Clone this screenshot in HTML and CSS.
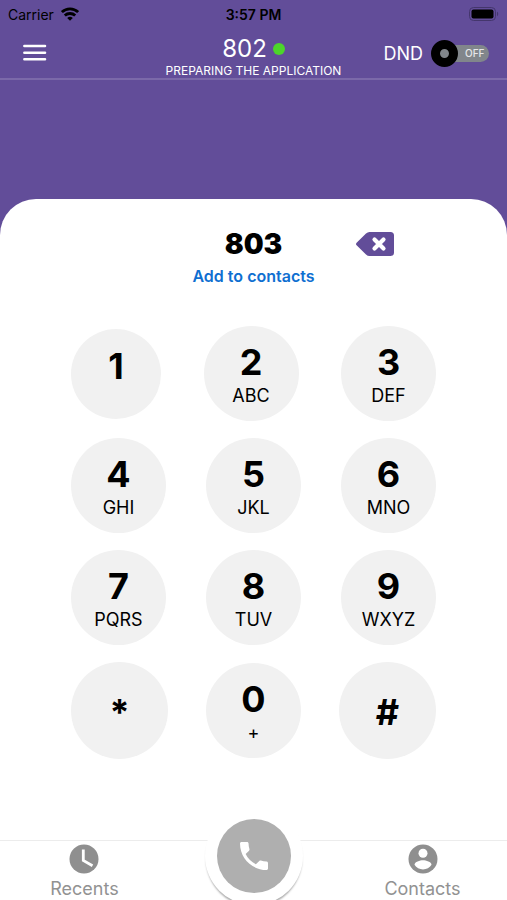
FILE: index.html
```html
<!DOCTYPE html>
<html lang="en">
<head>
<meta charset="utf-8">
<meta name="viewport" content="width=device-width, initial-scale=1">
<title>Dialer</title>
<link rel="stylesheet" href="styles.css">
</head>
<body>
<div class="app">
  <div class="status">
    <div class="carrier">Carrier
      <svg width="18" height="14" viewBox="0 0 18 14" fill="none" stroke="#000" stroke-width="2.8" aria-hidden="true"><path d="M.9 5.1a11.6 11.6 0 0 1 16.2 0M3.8 8.6a7.5 7.5 0 0 1 10.4 0"/><path d="M9 13.8 6.2 11a4 4 0 0 1 5.6 0z" fill="#000" stroke="none"/></svg>
    </div>
    <div class="time">3:57 PM</div>
    <svg class="battery" width="30" height="14" viewBox="0 0 30 14" aria-hidden="true"><rect x=".5" y=".5" width="26" height="13" rx="4" fill="none" stroke="#44366c"/><rect x="2.500" y="2.500" width="22" height="9" rx="2"/><path d="M28 4.8c1.6.6 1.6 3.8 0 4.4z" fill="#44366c"/></svg>
  </div>
  <header class="header">
    <button class="menu" type="button" aria-label="Menu"><svg width="24" height="18" viewBox="0 0 24 18" stroke="#fff" stroke-width="2.6" stroke-linecap="round"><path d="M1.4 2h20.600M1.4 8.700h20.600M1.4 15.200h20.600"/></svg></button>
    <div class="account">
      <div class="extension">802 <span class="online"></span></div>
      <div class="state">PREPARING THE APPLICATION</div>
    </div>
    <label class="dnd">DND
      <span class="switch"><input type="checkbox"><span class="knob"></span><span class="off">OFF</span></span>
    </label>
  </header>
  <main class="sheet">
    <div class="entry">
      <output class="number">803</output>
      <button class="erase" type="button" aria-label="Delete"><svg width="38" height="24" viewBox="0 0 38 24"><path d="M.6 10.7 10 1.6Q11.6 0 13.500 0H34.500q3.500 0 3.500 3.500v17q0 3.500-3.500 3.500H13.500q-1.900 0-3.500-1.600L.6 13.300q-1.200-1.300 0-2.600z" fill="#624d99"/><path d="m18.500 7.500 9 9m0-9-9 9" stroke="#fff" stroke-width="4.200" stroke-linecap="round"/></svg></button>
    </div>
    <button class="add" type="button">Add to contacts</button>
    <div class="pad">
      <div class="row">
        <button class="key small" type="button"><b>1</b><span></span></button>
        <button class="key" type="button"><b>2</b><span>ABC</span></button>
        <button class="key" type="button"><b>3</b><span>DEF</span></button>
      </div>
      <div class="row">
        <button class="key" type="button"><b>4</b><span>GHI</span></button>
        <button class="key" type="button"><b>5</b><span>JKL</span></button>
        <button class="key" type="button"><b>6</b><span>MNO</span></button>
      </div>
      <div class="row">
        <button class="key" type="button"><b>7</b><span>PQRS</span></button>
        <button class="key" type="button"><b>8</b><span>TUV</span></button>
        <button class="key" type="button"><b>9</b><span>WXYZ</span></button>
      </div>
      <div class="row">
        <button class="key symbol" type="button"><b>*</b></button>
        <button class="key" type="button"><b>0</b><span>+</span></button>
        <button class="key symbol" type="button"><b>#</b></button>
      </div>
    </div>
  </main>
  <nav class="tabs">
    <a class="tab" href="#recents">
      <svg width="30" height="30" viewBox="0 0 30 30"><circle cx="15" cy="15" r="14.500" fill="#8f8f8f"/><path d="M14.300 5.500v11l9.200 5.300" fill="none" stroke="#fff" stroke-width="2.800"/></svg>
      Recents
    </a>
    <button class="call" type="button" aria-label="Call"><span class="disc"><svg width="28" height="28" viewBox="3 3 18 18"><path fill="#fff" d="M6.620 10.790c1.440 2.830 3.760 5.140 6.590 6.590l2.200-2.200c.27-.27.67-.36 1.020-.24 1.120.37 2.330.57 3.570.57.55 0 1 .45 1 1V20c0 .55-.45 1-1 1-9.390 0-17-7.610-17-17 0-.55.45-1 1-1h3.500c.55 0 1 .45 1 1 0 1.250.2 2.450.57 3.570.11.35.03.74-.25 1.020l-2.200 2.200z"/></svg></span></button>
    <a class="tab" href="#contacts">
      <svg width="30" height="30" viewBox="0 0 30 30"><circle cx="15" cy="15" r="14.500" fill="#8f8f8f"/><circle cx="15" cy="9.200" r="4.500" fill="#fff"/><path d="M6.500 20.800c0-2.900 5.500-4.500 8.500-4.500s8.500 1.600 8.500 4.500c-1.900 2.900-5 4.600-8.500 4.600s-6.600-1.700-8.500-4.600z" fill="#fff"/></svg>
      Contacts
    </a>
  </nav>
</div>
</body>
</html>
```
FILE: styles.css
```css
* {
  box-sizing: border-box;
}

body {
  margin: 0;
  font-family: Inter, "Liberation Sans", sans-serif;
  color: #000;
}

button {
  padding: 0;
  border: 0;
  background: none;
  color: inherit;
  font: inherit;
  cursor: pointer;
}

svg {
  display: block;
  flex: none;
}

.app {
  display: flex;
  flex-direction: column;
  min-height: 100vh;
  overflow: hidden;
  background: linear-gradient(#624d99 280px, #fff 280px);
}

.status {
  display: grid;
  grid-template-columns: 1fr auto 1fr;
  align-items: center;
  height: 28px;
  padding: 0 8px;
  font-size: 14px;
}

.carrier {
  display: flex;
  align-items: center;
  gap: 7px;
}

.time {
  font-weight: 600;
}

.battery {
  justify-self: end;
}

.header {
  display: grid;
  grid-template-columns: 1fr auto 1fr;
  height: 52px;
  padding: 0 18px;
  border-bottom: 2px solid #7b69a9;
  color: #fff;
}

.menu {
  justify-self: start;
  align-self: center;
  margin-left: 5px;
}

.account {
  text-align: center;
}

.extension {
  display: flex;
  align-items: center;
  justify-content: center;
  gap: 6px;
  padding-top: 6px;
  font-size: 24px;
  line-height: 30px;
}

.online {
  width: 12px;
  height: 12px;
  border-radius: 50%;
  background: #4cd52a;
}

.state {
  font-size: 12px;
  line-height: 14px;
}

.dnd {
  display: flex;
  align-items: center;
  justify-self: end;
  align-self: center;
  gap: 8px;
  font-size: 18px;
}

.switch {
  position: relative;
  display: flex;
  align-items: center;
  width: 58px;
  height: 27px;
}

.switch input {
  position: absolute;
  inset: 5px 0 5px 6px;
  margin: 0;
  appearance: none;
  border-radius: 9px;
  background: #81868b;
}

.knob {
  position: relative;
  width: 27px;
  height: 27px;
  border: 9px solid #000;
  border-radius: 50%;
  background: #81868b;
}

.off {
  position: relative;
  margin-left: 7px;
  color: #e6e6ea;
  font-size: 10px;
  font-weight: 500;
}

.sheet {
  flex: 1;
  margin-top: 119px;
  padding-top: 28px;
  border-radius: 36px 36px 0 0;
  background: #fff;
  text-align: center;
}

.entry {
  display: grid;
  grid-template-columns: 1fr auto 1fr;
  align-items: center;
  height: 32px;
}

.number {
  grid-column: 2;
  font-size: 28px;
  font-weight: 900;
}

.erase {
  justify-self: start;
  margin-left: 74px;
}

.add {
  margin-top: 7px;
  color: #0f6fd1;
  font-size: 16px;
  font-weight: 600;
  line-height: 20px;
}

.pad {
  display: grid;
  gap: 17px;
  padding: 40px 14% 0;
}

.row {
  display: flex;
  align-items: center;
  justify-content: space-between;
}

.key {
  display: flex;
  flex-direction: column;
  align-items: center;
  justify-content: center;
  gap: 6px;
  width: 95px;
  height: 95px;
  padding-top: 3px;
  border-radius: 50%;
  background: #f1f1f1;
  font-size: 18px;
  line-height: 20px;
}

.key b {
  font-size: 36px;
  font-weight: 700;
  line-height: 36px;
}

.small {
  width: 90px;
  height: 90px;
  padding: 0 0 10px;
}

.symbol {
  width: 97px;
  height: 97px;
}

.tabs {
  position: relative;
  display: flex;
  justify-content: space-between;
  height: 60px;
  border-top: 1px solid #ececec;
  background: #fff;
}

.tab {
  display: flex;
  flex-direction: column;
  align-items: center;
  width: 33.333%;
  padding-top: 3px;
  color: #929292;
  font-size: 18px;
  line-height: 30px;
  text-decoration: none;
}

.call {
  position: absolute;
  top: -34px;
  left: 50%;
  display: grid;
  place-items: center;
  width: 98px;
  height: 98px;
  border-radius: 50%;
  background: #fff;
  box-shadow: 0 3px 2px -1px #aaa;
  transform: translateX(-50%);
}

.disc {
  display: grid;
  place-items: center;
  width: 74px;
  height: 74px;
  border-radius: 50%;
  background: #afafaf;
}
```
